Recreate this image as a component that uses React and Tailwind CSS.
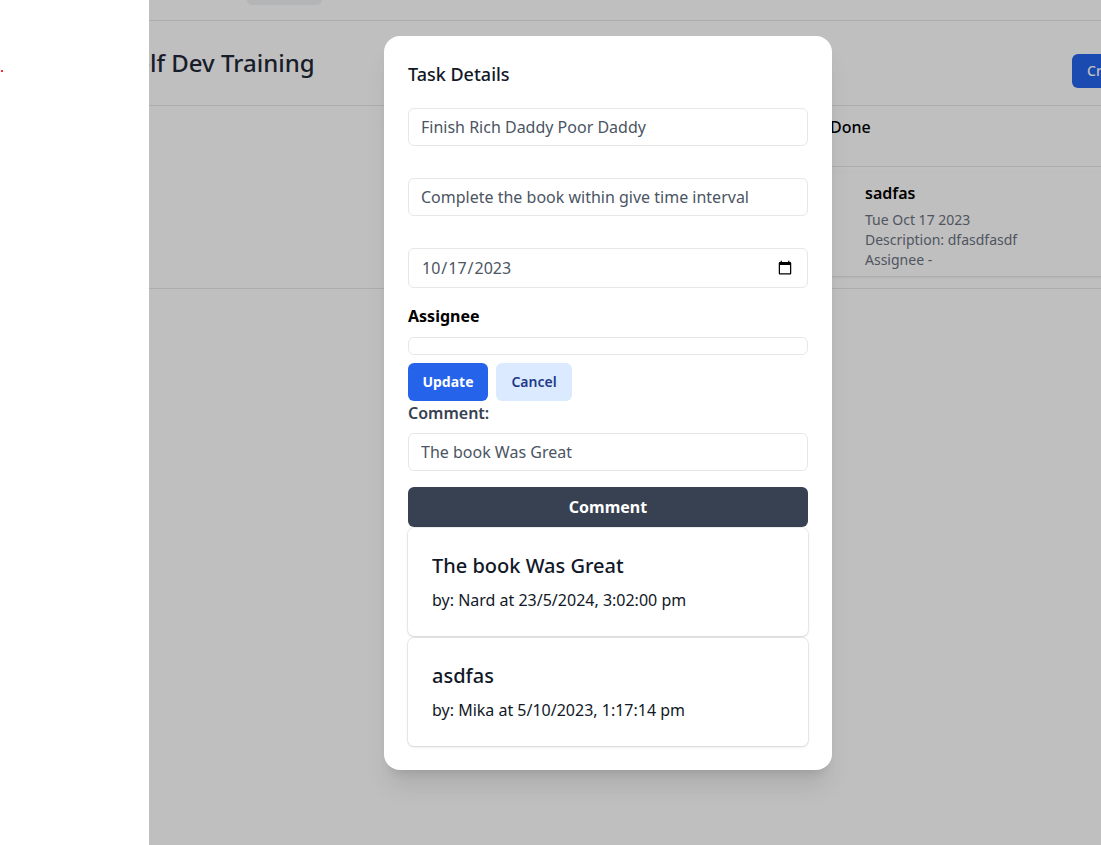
import React from "react";

const font = { fontFamily: '"Noto Sans", "Open Sans", Arial, sans-serif' };

function Comment({ text, by }) {
  return (
    <div className="rounded-md bg-white p-6 shadow-[0_0_0_1px_rgba(0,0,0,0.06),0_1px_3px_rgba(0,0,0,0.12)]">
      <div className="text-xl leading-7 font-medium text-[#111827]">{text}</div>
      <div className="mt-2 text-base leading-6 text-[#111827]">{by}</div>
    </div>
  );
}

export default function App() {
  return (
    <div className="relative flex h-[845px] w-full overflow-hidden bg-white" style={font}>
      {/* sidebar */}
      <div className="w-[149px] shrink-0 bg-white">
        <div className="ml-px mt-[70px] h-[2px] w-[2px] bg-red-500" />
      </div>

      {/* main */}
      <div className="min-w-0 flex-1 overflow-hidden bg-white">
        <div className="flex h-[21px] border-b border-[#e5e7eb] pl-[98px]">
          <div className="h-[5px] w-[75px] rounded-b-md bg-[#f1f2f4]" />
        </div>
        <div className="grid h-[85px] grid-cols-[923px_auto] items-center border-b border-[#e5e7eb]">
          <h1 className="-ml-[26px] text-2xl font-medium text-[#1f2937]">Self Dev Training</h1>
          <button className="mt-4 h-[34px] w-[120px] rounded-md bg-[#2563eb] pl-[15px] text-left text-sm font-medium text-white">
            Create Task
          </button>
        </div>
        <div className="ml-[235px] grid grid-cols-[223px_223px_1fr] border-b border-[#e5e7eb]">
          {["To Do", "In Progress", "Done"].map((c) => (
            <div key={c} className="flex h-[60px] items-start pt-[9px] text-base font-medium text-black">
              {c}
            </div>
          ))}
        </div>
        <div className="grid h-[122px] grid-cols-[660px_1fr] border-b border-[#e5e7eb]">
          <div />
          <div className="pt-[6px]">
            <div className="w-[360px] rounded-md bg-white pt-2 pb-[6px] pl-[56px] shadow">
              <div className="mb-[5px] text-base leading-6 font-semibold text-black">sadfas</div>
              <div className="text-sm leading-5 text-[#6b7280]">Tue Oct 17 2023</div>
              <div className="text-sm leading-5 text-[#6b7280]">Description: dfasdfasdf</div>
              <div className="text-sm leading-5 text-[#6b7280]">Assignee -</div>
            </div>
          </div>
        </div>
      </div>

      {/* overlay */}
      <div className="absolute inset-y-0 right-0 left-[149px] bg-black/25" />

      {/* modal */}
      <div className="absolute top-[36px] left-[384px] w-[448px] rounded-2xl bg-white p-6 shadow-xl">
        <h3 className="text-lg leading-7 font-medium text-[#111827]">Task Details</h3>
        <input
          readOnly
          value="Finish Rich Daddy Poor Daddy"
          className="mt-5 block h-[38px] w-full rounded-md border border-[#e5e7eb] px-3 text-base text-[#4b5563] outline-none"
        />
        <input
          readOnly
          value="Complete the book within give time interval"
          className="mt-8 block h-[38px] w-full rounded-md border border-[#e5e7eb] px-3 text-base text-[#4b5563] outline-none"
        />
        <input
          type="date"
          defaultValue="2023-10-17"
          className="mt-8 block h-[40px] w-full rounded-md border border-[#e5e7eb] px-3 text-base text-[#4b5563] outline-none"
        />
        <div className="mt-4 text-base leading-6 font-bold text-black">Assignee</div>
        <div className="mt-[9px] h-[18px] w-full rounded-md border border-[#e5e7eb]" />
        <div className="mt-2 flex gap-2">
          <button className="h-[38px] w-[80px] rounded-md bg-[#2563eb] text-sm font-bold text-white">Update</button>
          <button className="h-[38px] w-[76px] rounded-md bg-[#dbeafe] text-sm font-semibold text-[#1e3a8a]">Cancel</button>
        </div>
        <div className="text-base leading-6 font-semibold text-[#374151]">Comment:</div>
        <input
          readOnly
          value="The book Was Great"
          className="mt-2 block h-[38px] w-full rounded-md border border-[#e5e7eb] px-3 text-base text-[#4b5563] outline-none"
        />
        <button className="mt-4 block h-[40px] w-full rounded-md bg-[#374151] text-base font-bold text-white">
          Comment
        </button>
        <div className="mt-px flex flex-col gap-0.5">
          <Comment text="The book Was Great" by="by: Nard at 23/5/2024, 3:02:00 pm" />
          <Comment text="asdfas" by="by: Mika at 5/10/2023, 1:17:14 pm" />
        </div>
      </div>
    </div>
  );
}
